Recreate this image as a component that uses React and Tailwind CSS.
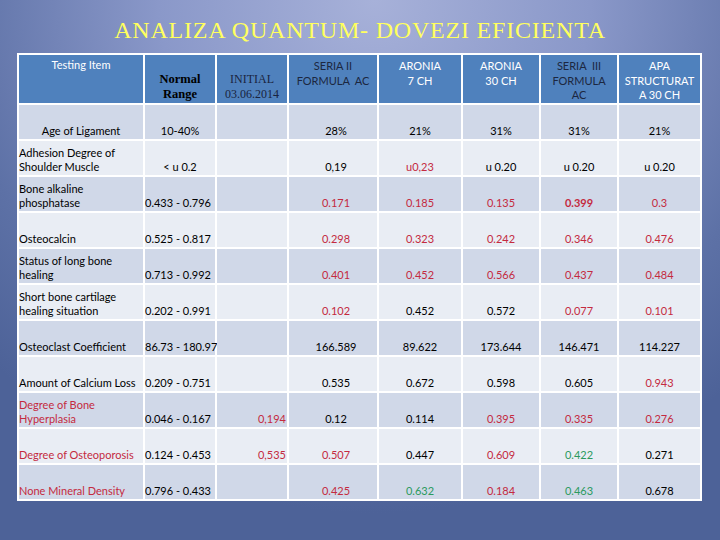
import React from "react";

// column widths in px (content only, 2px white rules between)
const COLS = "grid-cols-[124px_70px_70px_88px_82px_76px_76px_81px]";

const R = "text-[#c42a40]";
const G = "text-[#2b9a5e]";

// label, range, optional initial value, five result values [value, colour, bold]
const ROWS = [
  { label: "Age of Ligament", center: true, range: "10-40%", rc: true, vals: [["28%"], ["21%"], ["31%"], ["31%"], ["21%"]] },
  { label: "Adhesion Degree of\nShoulder Muscle", range: "< u 0.2", rc: true, vals: [["0,19"], ["u0,23", R], ["u 0.20"], ["u 0.20"], ["u 0.20"]] },
  { label: "Bone alkaline\nphosphatase", range: "0.433 - 0.796", vals: [["0.171", R], ["0.185", R], ["0.135", R], ["0.399", R, true], ["0.3", R]] },
  { label: "Osteocalcin", range: "0.525 - 0.817", vals: [["0.298", R], ["0.323", R], ["0.242", R], ["0.346", R], ["0.476", R]] },
  { label: "Status of long bone\nhealing", range: "0.713 - 0.992", vals: [["0.401", R], ["0.452", R], ["0.566", R], ["0.437", R], ["0.484", R]] },
  { label: "Short bone cartilage\nhealing situation", range: "0.202 - 0.991", vals: [["0.102", R], ["0.452"], ["0.572"], ["0.077", R], ["0.101", R]] },
  { label: "Osteoclast Coefficient", range: "86.73 - 180.97", vals: [["166.589"], ["89.622"], ["173.644"], ["146.471"], ["114.227"]] },
  { label: "Amount of Calcium Loss", range: "0.209 - 0.751", vals: [["0.535"], ["0.672"], ["0.598"], ["0.605"], ["0.943", R]] },
  { label: "Degree of Bone\nHyperplasia", red: true, range: "0.046 - 0.167", init: "0,194", vals: [["0.12"], ["0.114"], ["0.395", R], ["0.335", R], ["0.276", R]] },
  { label: "Degree of Osteoporosis", red: true, range: "0.124 - 0.453", init: "0,535", vals: [["0.507", R], ["0.447"], ["0.609", R], ["0.422", G], ["0.271"]] },
  { label: "None Mineral Density", red: true, range: "0.796 - 0.433", vals: [["0.425", R], ["0.632", G], ["0.184", R], ["0.463", G], ["0.678"]] },
];

const HEAD = [
  { t: "SERIA II\nFORMULA  AC", dark: true },
  { t: "ARONIA\n7 CH" },
  { t: "ARONIA\n30 CH" },
  { t: "SERIA  III\nFORMULA\nAC", dark: true },
  { t: "APA\nSTRUCTURAT\nA 30 CH" },
];

const Lines = ({ text }) =>
  text.split("\n").map((l, i) => (
    <span key={i} className="block whitespace-pre">{l}</span>
  ));

export default function App() {
  return (
    <div className="w-[720px] h-[540px] overflow-hidden bg-[radial-gradient(ellipse_75%_95%_at_52%_0%,#a7b1d9_0%,#8a98c9_40%,#5d71a6_78%,#4d6298_100%)]">
      <h1 className="pt-[18px] text-center text-[24px] leading-none tracking-[0.8px] text-[#ffff5e] font-['Liberation_Serif',serif]">
        ANALIZA QUANTUM- DOVEZI EFICIENTA
      </h1>

      <div
        className={`mt-[11px] ml-[17px] w-[685px] bg-white p-[2px] grid ${COLS} grid-rows-[48px_repeat(11,34px)] gap-[2px] text-[11px] leading-[14px] font-['Lato','Open_Sans',sans-serif] text-black`}
      >
        {/* header */}
        <div className="bg-[#4f81bd] text-white text-center pt-[3px]">Testing Item</div>
        <div className="bg-[#4f81bd] flex flex-col justify-end items-center pb-[1px] font-['Liberation_Serif',serif] font-bold text-[12.5px] leading-[15px] text-black">
          <span>Normal</span>
          <span>Range</span>
        </div>
        <div className="bg-[#4f81bd] flex flex-col justify-end items-center pb-[1px] font-['Liberation_Serif',serif] text-[12px] leading-[15px] text-[#1a2440]">
          <span>INITIAL</span>
          <span>03.06.2014</span>
        </div>
        {HEAD.map((h) => (
          <div
            key={h.t}
            className={`bg-[#4f81bd] text-center pt-[4px] leading-[14.5px] ${h.dark ? "text-[#1c2740]" : "text-white"}`}
          >
            <Lines text={h.t} />
          </div>
        ))}

        {/* body */}
        {ROWS.map((r, i) => {
          const bg = i % 2 === 0 ? "bg-[#d0d8e8]" : "bg-[#e9edf4]";
          return (
            <React.Fragment key={r.label}>
              <div className={`${bg} flex flex-col justify-end pb-[1px] ${r.center ? "items-center" : "items-start"} ${r.red ? R : ""}`}>
                <Lines text={r.label} />
              </div>
              <div className={`${bg} flex items-end pb-[1px] whitespace-nowrap ${r.rc ? "justify-center" : "justify-start"}`}>
                {r.range}
              </div>
              <div className={`${bg} flex items-end justify-end pb-[1px] pr-[1px] ${R}`}>{r.init || ""}</div>
              {r.vals.map(([v, c, b], j) => (
                <div
                  key={j}
                  className={`${bg} flex items-end justify-center pb-[1px] ${j === 0 ? "pl-[6px]" : ""} ${c || ""} ${b ? "font-bold" : ""}`}
                >
                  {v}
                </div>
              ))}
            </React.Fragment>
          );
        })}
      </div>
    </div>
  );
}
